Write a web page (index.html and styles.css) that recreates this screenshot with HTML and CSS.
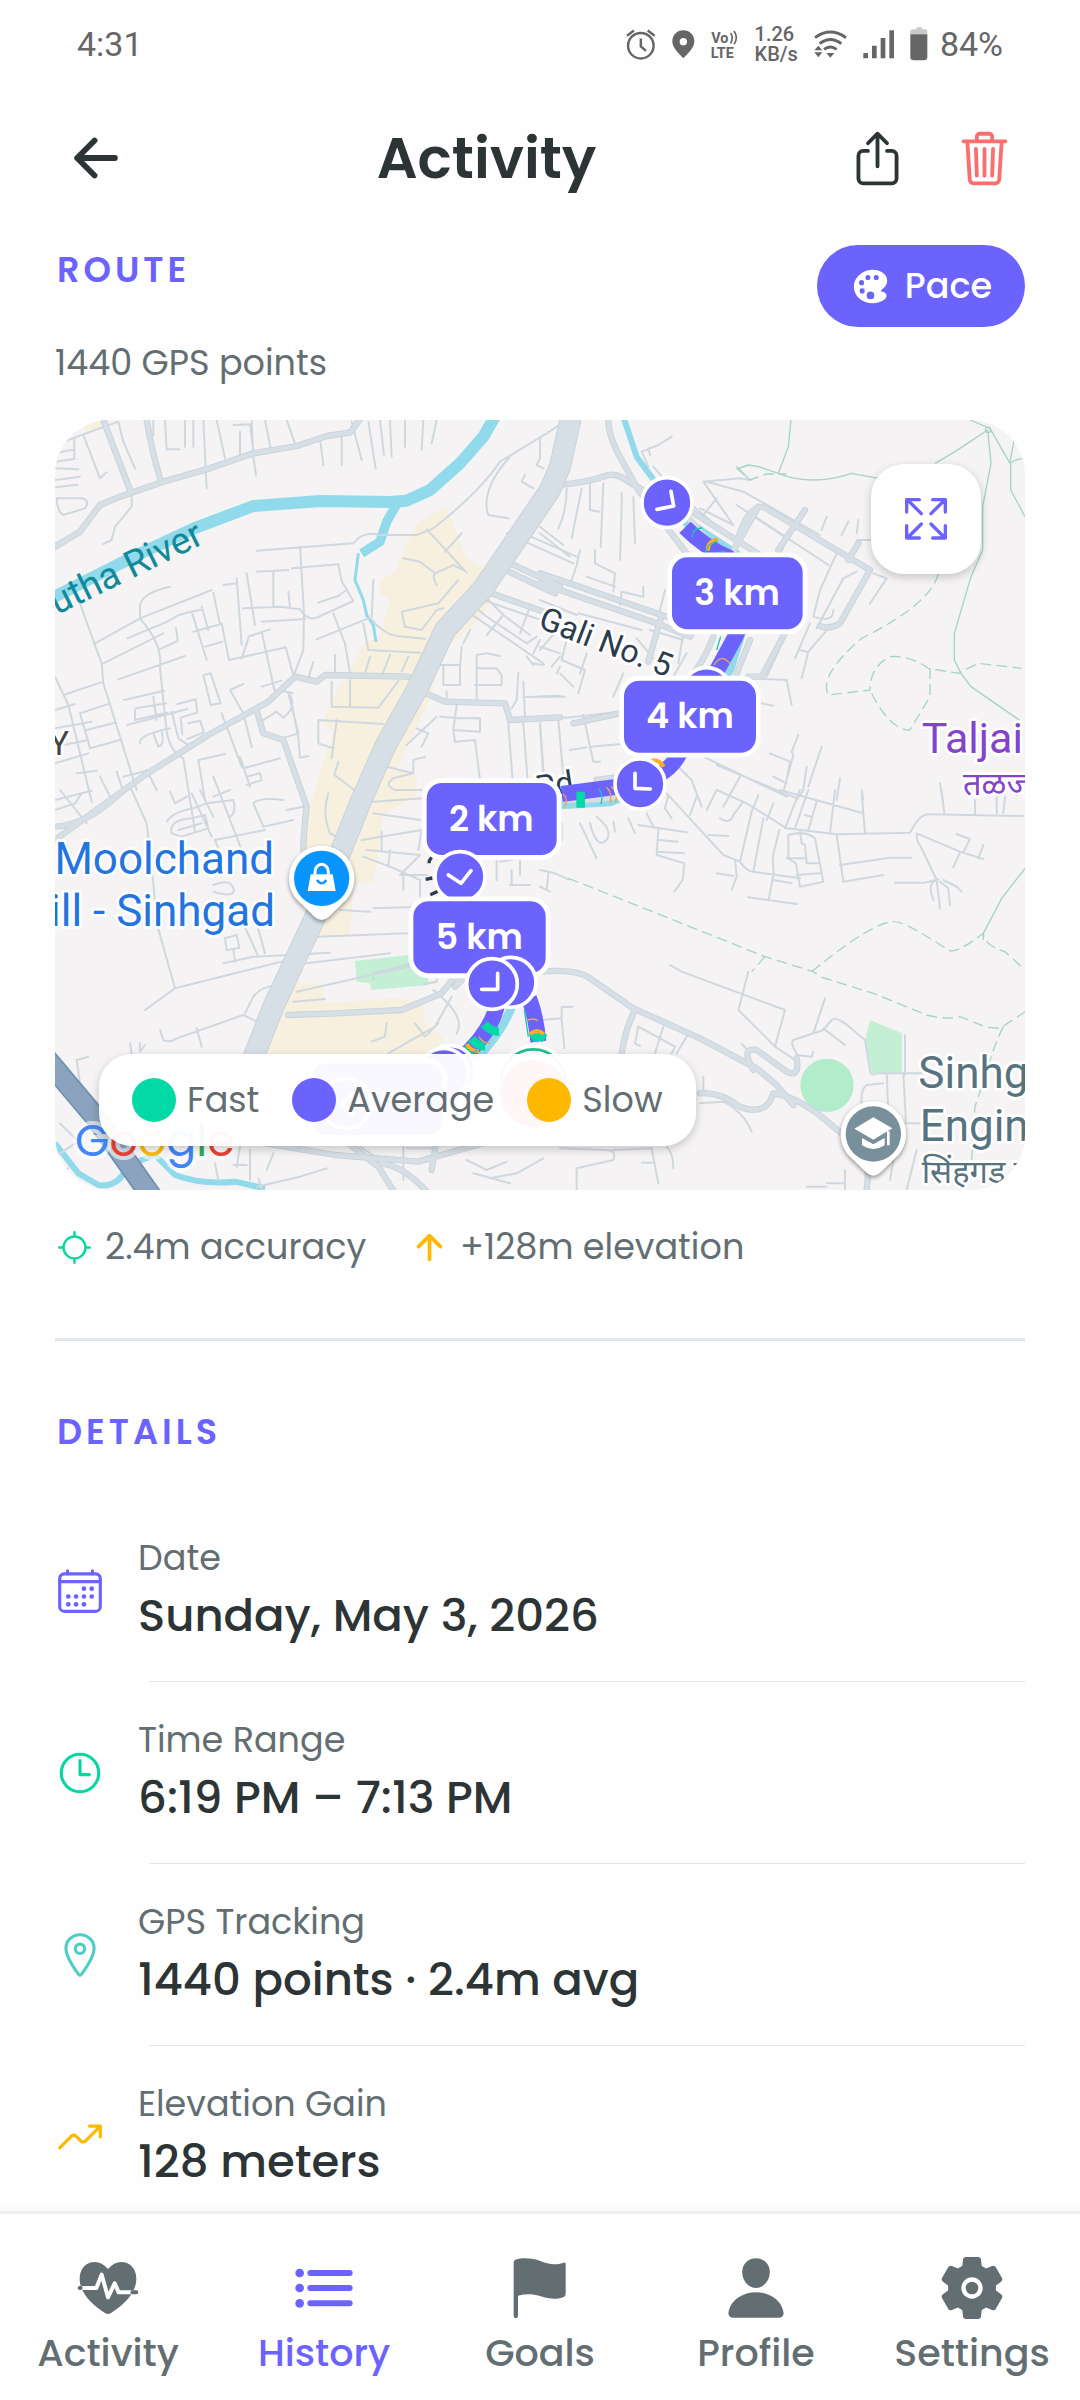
FILE: index.html
```html
<!DOCTYPE html>
<html lang="en">
<head>
    <meta charset="utf-8">
    <meta name="viewport" content="width=device-width, initial-scale=1">
    <title>Activity</title>
    <link rel="stylesheet" href="styles.css">
</head>
<body>
    <div class="statusbar">
        <span>4:31</span>
        <div class="status-icons">
            <svg width="30" height="33" viewBox="87 54 87 93" fill="none" stroke="#666" stroke-width="7">
                <circle cx="130" cy="104" r="37"/>
                <path d="M90 75l20-15M170 75l-20-15"/>
                <path d="M130 83v23l15 13"/>
            </svg>
            <svg width="23" height="31" viewBox="237 54 69 93">
                <path fill="#666" fill-rule="evenodd" d="M271 58c-19 0-33 14-33 33 0 20 18 34 33 51 15-17 33-31 33-51 0-19-14-33-33-33zm0 23a11 11 0 1 1 0 22 11 11 0 0 1 0-22z"/>
            </svg>
            <svg width="28" height="31" viewBox="344 54 84 93">
                <text class="volte" x="345" y="97">Vo</text>
                <text class="volte" x="343" y="141">LTE</text>
                <path fill="none" stroke="#666" stroke-width="5" d="M403 66q9 14 0 31M413 60q14 20 0 40"/>
            </svg>
            <span class="speed">1.26<br>KB/s</span>
            <svg width="33" height="31" viewBox="642 54 99 93" fill="none" stroke="#666" stroke-width="9">
                <path d="M645 80q46-34 93 0M659 98q32-25 65 0M672 115q19-14 38 0"/>
                <path fill="#666" stroke="none" d="M643 118l12-14 12 14zM643 124h24l-12 15zM679 126h24l-12 14z"/>
            </svg>
            <svg width="31" height="31" viewBox="792 54 93 93">
                <path fill="#666" d="M793 126h14v16h-14zM819 104h14v38h-14zM845 81h14v61h-14zM871 58h14v84h-14z"/>
            </svg>
            <svg width="18" height="34" viewBox="938 50 54 102">
                <path fill="#c9c9c9" d="M939 72V64q0-7 8-7h10v-6h17v6h9q7 0 7 7v8z"/>
                <path fill="#666" d="M939 72h51v68q0 10-10 10h-31q-10 0-10-10z"/>
            </svg>
            <span class="battery">84%</span>
        </div>
    </div>

    <header class="header">
        <button class="icon-btn" type="button" aria-label="Back">
            <svg class="stroke-bold" width="62" height="62" viewBox="0 0 512 512">
                <path d="M244 400L100 256l144-144M120 256h292"/>
            </svg>
        </button>
        <h1>Activity</h1>
        <div class="actions">
            <button class="icon-btn" type="button" aria-label="Share">
                <svg class="stroke" width="61" height="61" viewBox="0 0 512 512">
                    <path d="M336 192h40a40 40 0 0140 40v192a40 40 0 01-40 40H136a40 40 0 01-40-40V232a40 40 0 0140-40h40M336 128l-80-80-80 80M256 321V48"/>
                </svg>
            </button>
            <button class="icon-btn red" type="button" aria-label="Delete">
                <svg class="stroke" width="61" height="61" viewBox="0 0 512 512">
                    <path d="M112 112l20 320c.95 18.49 14.4 32 32 32h184c17.67 0 30.87-13.51 32-32l20-320M80 112h352M192 112V72a24 24 0 0124-24h80a24 24 0 0124 24v40M256 176v224M184 176l8 224M328 176l-8 224"/>
                </svg>
            </button>
        </div>
    </header>

    <main>
        <section class="route">
            <div class="route-head">
                <h2>ROUTE</h2>
                <button class="pace" type="button">
                    <svg width="41" height="41" viewBox="0 0 512 512" fill="currentColor">
                        <path d="M441 336.2l-.06-.05c-9.93-9.18-22.78-11.34-32.16-12.92l-.69-.12c-9.05-1.49-10.48-2.5-14.58-6.17-2.44-2.17-5.35-5.65-5.35-9.94s2.91-7.77 5.34-9.94l30.28-26.87c25.92-22.91 40.2-53.66 40.2-86.59s-14.25-63.68-40.2-86.6c-35.89-31.59-85-49-138.37-49C223.72 48 162 71.37 116 112.11c-43.87 38.77-68 90.71-68 146.24s24.16 107.47 68 146.23c21.75 19.24 47.49 34.18 76.52 44.42a266.17 266.17 0 0086.87 15h1.81c61 0 119.09-20.57 159.39-56.4 9.7-8.56 15.15-20.83 15.34-34.56.21-14.17-5.37-27.95-14.93-36.84zM112 208a32 32 0 1132 32 32 32 0 01-32-32zm40 135a32 32 0 1132-32 32 32 0 01-32 32zm40-199a32 32 0 1132 32 32 32 0 01-32-32zm64 271a48 48 0 1148-48 48 48 0 01-48 48zm72-239a32 32 0 1132-32 32 32 0 01-32 32z"/>
                    </svg>
                    Pace
                </button>
            </div>
            <p class="points">1440 GPS points</p>

            <div class="map">
                <svg class="map-canvas" viewBox="0 0 2910 2310" preserveAspectRatio="xMidYMid slice">
                    <!-- roads are drawn twice: outline, then the lighter fill -->
                    <defs>
                        <g id="roads">
                            <path d="M0 380l75-45 60-80 60-25 130-45 140-40 130-45 130-22 90-30 70-10 30-40"/>
                            <path d="M145 0l80 210M275 0q15 90 40 175"/>
                            <path d="M1060 770l-250-5-25 20-65-15-80 75-180 100-190 120L0 1260M605 870l20 70 60 20 70 200q-10 80-10 130M0 1220q80-5 160-70l60-50"/>
                            <path d="M1100 815l70 30 180 5 15 50 150-8M1280 510l200 70M1345 420l170 80M1330 440l170 80"/>
                            <path d="M1500 195q90-5 160-30 30-5 60 20l80 45 70 30 140 160M1660 0q0 50 40 120l50 90 160 210M1870 250l300 190M2045 370q30-110 80-110l320 190-90 160q-30 20-60 8M2110 260l-90 160M2250 270l-80 120M2410 370l-30 50"/>
                            <path d="M1455 460l380 130 60-10M1455 490l350 120 100 40 100-190M1820 585l-40 140M2200 620l-80 150h-40M2085 660l-60 150-170 240-230 30M1975 650q-40 110-140 200l-280 60"/>
                            <path d="M1455 1140h140q100 0 190-50l60-70M1200 1590v80l-40 50-120 50-200 10-140 5M1200 1700l60-60M1455 1655q110-10 150 20l130 90 200 90 170 90 60 50 50 60M1740 1770q-30 60-40 130M2095 1950q-40-70 10-60l90 65q40 20 30-40M1935 2020q60-5 120 40 80 30 100-40 80 10 180 100l90 70q20 50 10 120"/>
                            <path d="M540 2155l300 50 250 20 280-80M880 2170l90 70 50 80M980 2230q70 10 140 90M1130 2250l20-120"/>
                        </g>
                        <path id="highway" d="M1555-40l-40 180-30 70-200 295-115 125-85 180-95 170-75 170-60 150-60 160-140 300-110 280"/>
                    </defs>

                    <!-- blocks -->
                    <g transform="translate(-45 -60)">
                        <path class="shop" d="M130 65l80-5-20 25-50 15zM1280 475l105 60-60 120-110 90-45 150-70 150-30 60 60 20v60l-100 60-30 200-60 10-10 150-130 0 20-130-40-130 60-230 40-120-30-25 30-80 60-100 30-60 50-20 30-110-30-20v-40l40-20 70-150 90-50z"/>
                        <path class="shop" d="M700 1750h150v60l220-15 80 10v60l60 50-60 90-50-40-380 10-60-30-40 20z"/>
                        <path class="park" d="M945 1683l160-18 60 70v20l-170 15-5-20-40-5z"/>
                    </g>
                    <g transform="translate(1455 1110)">
                        <path class="park" d="M990 690l96 40v118l-90 2-20-100z"/>
                        <circle class="park-dark" cx="861" cy="886" r="80"/>
                    </g>

                    <!-- water -->
                    <g class="water" transform="translate(-45 -60)">
                        <path stroke-width="36" d="M1370 40l-40 70-70 80-90 80-70 32-50 4-210-3-200 15-180 68-160 75-100 50-170 86"/>
                        <path stroke-width="28" d="M1075 305l-35 60-20 60-55 35"/>
                        <path stroke-width="9" d="M955 460l-5 40-5 40 25 60 10 45 20 30 8 50"/>
                        <path stroke-width="18" d="M45 2230l70 90 60 35q60 10 90-60l80-30 60 60q80 30 180 20l90 20"/>
                        <path stroke-width="26" d="M1415 1820q-30 80-110 160"/>
                    </g>
                    <g class="water" transform="translate(1455 -60)">
                        <path stroke-width="18" d="M250 50l40 120 55 75"/>
                        <path stroke-width="28" d="M400 340l190 125 30 180-50 160-160 260-80 90-120 50-200 12"/>
                    </g>

                    <!-- small streets, north west -->
                    <g class="street" transform="translate(-45 -60)">
                        <path d="M45 135l80-30 110-40M45 160l60-12M45 185l58-8V120M45 205l70 3M45 240l75-10M45 262l68-8M130 105l50 130 20-18M235 65l15 60 35 80M375 60l5 88h38M340 60v45M435 60v80M460 60v80M490 60l10 205M530 60l25 115M580 75l50-2 10 80M600 95v70M635 60l5 110 8 55M675 60l18 90M740 60l25 70M840 115l10 80M905 110v85M935 65l30 115M985 65l22 140M1020 60l12 105M1050 60l5 110M1095 60v80M1150 60l-5 90M1190 60l-15 70"/>
                        <path d="M50 295h80q20 10 5 30l-65 20q-18-10-20-50M275 290v30l-50 60-10 40-25 12"/>
                        <path d="M650 452l290-22q30-40 80-25h110l50-20q140-110 200-200l140-85 60-40M1500 115v60l-10 20 20 10M1410 170q-90 100-65 175l60 10M1480 265l-35-20 10-20"/>
                        <path d="M780 440l12 200-2 110-30 80M650 515l95-5M755 505l140-12 10 50 35 60-110 50q-30 10-50-25l-60-8-110 5M700 515v105M745 575l5 45M835 608l60-20 20-15M665 665l130-8M620 520l25 155M590 535l15 200M550 555l40-5M390 560q-90 20-90 60v35l-135 75M300 655l215-85M300 655q70 80 60 150l20 190q10 60 50 80l35 220M120 610l50 140 15 40 5 60 100 320M190 790l180-90M235 838l200-70M45 830l40 85 70 290M70 885l120-40M262 715l120-50 35-20 35-10 30-5M358 748l55-25-5-40M455 635l45 145M485 620l20 70M460 695l80-22-20-95M497 740l50-15M545 670l22 110 170-38 25 90M625 710l65-22M605 775l20-60M665 695l38 175 55 8M830 718l160-65q40 50 80 55l85 8M880 640l35 90 15 90M970 670l15 80 155 8M885 765v55M820 785l-15 50M990 770l-15 50M1050 765l-22 55M1105 770l-20 45"/>
                        <path d="M1090 475l50 10 45 35 55-25 30 15M1185 520q-10 10 5 35M1160 388l120 130M1265 400l-50 55M1085 635l110-25 60-70M1085 635l10 45 50 10 45-60 20-5M1000 540l-5 110"/>
                        <path d="M490 825l22-5 30 90-30 5zM570 870l40-18M570 870l40 70 25 100M545 940l60 160M252 900l120-28M288 925l90-15M285 930v30l95-22M262 975l180-48M340 890l10 70M395 935l20 80 30 20M412 912l55-14 5 40-50 15 5 50M445 970l35-8 12 35-50 20M300 1030q-5-25 90-45M340 1000l15 40q20-5 10-45M120 940l90-30M120 940l30 105 90-25M140 990l85-22M475 1080l80-18M475 1080l20 120M520 1130l85 220M600 1070l30 90M610 1105l110-30M620 1130l40-10 5 20-45 15M670 960l40-25 20 18q40-30 20-70l25 130 5 60 25-5M745 880l30 120-50 15M665 860l60-18"/>
                        <path d="M875 845v75l140 3 60-80M930 840v80M835 960l195 12M890 960l-15 115M835 960v70l45 15M895 1085l-12 40 60 45M1040 1100l80 20-60 15q-30 20 5 35h80M1155 1070l-35 10v40"/>
                        <path d="M1200 950l60 5h60v40l-80-5 5 35 60-5 20 160M1100 1035l90-85M1130 985l35 15-20 40M1250 915l-10 75M1220 875v30M1190 795h70v60h-50v-60M1265 740l-5 60M1310 905v-140l30-5 40 8M1310 805h60l15 20v30h-80M1435 820l-5 80-15 25M1450 845l5 110M1450 892l110-5M1405 970l15 200M1450 970l15 200M1500 970l15 200"/>
                        <path d="M1280 600l60 50 120 80 30-20M1330 585l60 60-50 60M1390 645l80 60M1290 640l220 150q10 10-30 0M1260 670l-30 40M1290 690l-20 40M1400 400l200 90M1450 400l160 70M1470 620l-30 80M1330 600l230 80-60 70M1460 770l20 25M1500 720l-20 40"/>
                        <path d="M45 930l60-18M45 985l110-20M45 1040l100-20M45 1090l100-30M110 1120l60-8M45 1200l110-28M180 1130l30 60M230 1115l20 60M250 1130l70-18M320 1110l30 60"/>
                    </g>
                    <!-- small streets, west and south -->
                    <g class="street" transform="translate(-45 1110)">
                        <path d="M275 0l45 100 20 180 10 120 55 195-90 65M405 595l180-45 200-50M550 520l90-20 230-12M555 445l35-10 8 38-38 8zM580 480l5 35M610 400l45 100M650 400l25 90M390 5l15 35 35-20M380 95q20-30 80-40l40-15 80-10q10 40-10 50M395 130q-10-40 60-45l40-10 10 40-80 25zM415 120l70-20M455 10l60 130M480 0l40 80M640 40q20-20 90-10M640 40l30 70 90-20M525 150l150-30M525 150l20 50M570 0l-50 20M520 285q50-20 60 10t-60 10M740 60l50-10M45 60l60-20 20-30M60 0l80 100"/>
                        <path d="M830 440l310-12M800 520l250-30M770 605l400-90h20v60l-40 8M1000 570v-20l120-30M760 635l95-8M615 670l25-50q20-30 75-35M360 720l10 30q20 10 40-5l200-70 40 20M470 715l15 55M270 760l12 70M300 760v25l15-20M145 800l-35 10 20 140"/>
                        <path d="M865 10q-20 60 5 120l20 10M1000 35l150-10M1000 70l140 20M965 150l180-30-10 60M980 180l160 15-60 60h80M1025 125v60M1050 180l-5 50M1090 250v50M970 200l80 30 90 40v50M1000 355l150-5M900 360l90 5M1200 180v40l70 10 30-15M1310 180l60 10v80M1380 215l60-10v50M1415 240v45M1410 285h60M1040 700l-5 40-40 15M1125 700l30 40 40-40M1045 790l140-80 50-90M1180 600q100 80 70 130"/>
                        <path d="M960 1070l60 40M1090 1100v-30M1090 1170v-70M580 1125h40M600 1070l-10 60M650 1190l130-30 80-25M655 1165l10 30M630 1080v90M700 1090l-20 50M525 1120l10 50M1100 1075h80M1280 1110l60 30 60-25M1300 1150l110 30M1350 1165l80-15 80-45M45 1155l40-20M60 1000l60 60M45 1100l60-40"/>
                    </g>
                    <!-- small streets, north and east -->
                    <g class="street" transform="translate(1455 -60)">
                        <path d="M395 110l-40 25-50 20 20 45M325 145l5 20M80 265q0 70-25 120M125 265l-30 150M150 250v80l28 5M190 250l-8 190M245 280v40l-5 160M280 290l5 140M340 200l60 70 110 90M490 245l110-10 30 5-40-40M490 245l90 130-100-50M530 295l-40 50M500 245l110 30 230 130M590 315l150 100-20 50M645 350l220 145M0 400l90 70M0 380l70 55M120 450l-10 45-20 60M165 450v40l60 30-5 55M140 530l85 30M245 575l-5 40M245 575l65 15v-30M375 570l-15 60M0 600l110 45M115 640l190 50M860 350l-15 40M925 365l-20 40M955 360l-5 40M1000 420h-50M1000 520l40 15-50 75M950 515l-40 20-80 150M890 460l-50 110-20 80q60 20 60-20M740 700l-60 130"/>
                        <path d="M865 685l-60 70-20 80M810 670l-45 105M780 750l20 5M640 835l100 5 15 75M640 905l60 12M0 740l60 20M85 700l-20 80 70 30-20 70M140 760l-20 60M60 770l-25 30M0 890h75M60 820l40 40M290 715l50 60M330 690l100 30M430 700l-15 90M250 820l-30 70M440 760l-40 70M60 800l-10 20"/>
                        <path d="M0 960l130-12 150-18h110M55 960l15 170M0 970l10 160M130 945l20 95 170-15M90 1050l50-8M150 1040l10 45h20M395 1080l60 60 30 80M490 1070l250 120M530 1095l240 100M775 1005l-20 50 5 10-30 110M690 1060l60 25-10 55M845 1040l-40 120M700 1130l40 20M600 1130l-50 90M800 1100l-10 70-20 30M900 1135l-10 65M965 1170l5 30M1200 1150l8 50"/>
                    </g>
                    <g class="street" transform="translate(1455 1110)">
                        <path d="M530 0l90 40 120 75 150 18 220-5q30-60 60-55l280 5M380 10l170 185 50 20M385 15l-10 40 20 30M470 20l-20 55M505 135l60 3M500 60l30-60M540 85q30 20 40-10l30-40M700 40l-20 50M655 15l-20 50-35 150q20 30 40 30l140 20M670 85l-30 160M718 120l-20 80 3 50-15 80M625 322l145 20M700 270l55 10M745 135q50-15 80 10l25 130-70 15-12-70-23-15zM780 120l5 40 10 5 5 55h35M740 205h60M770 255l70-5M780 0l-45 115M805 0l-40 115M830 35l-25 85M885 0l-15 130M965 10l10 120M720 0l250 70M795 75l20 5"/>
                        <path d="M1205 0l8 70M1305 30v45M1370 20v50M1395 20l-5 50M1130 130l130 55 70 22M1250 132l40 15-20 40-10 0-20 45M1330 165l-15 40M1130 135q0 20 10 30l50 105 10 85M1065 278h90l40-10M1190 270q-30 10-10 60M1200 275l25 20 5 50M1210 270l40 20 15 15M890 135l20 140 120-20M900 225l150-22h65"/>
                        <path d="M295 105l145 22M320 70l20 40M355 120l-5 75 83 25-5 50-25 35M358 150l55 5M352 185l80 5M150 100q20 80 50 50 20-30-30-70M120 100l50 105M220 95l5 30M265 85l20 45M530 250l50 8M585 210l5 50-15 40M65 100v50M0 240l40 8 45 20M0 290l30 15M25 250l-5 50"/>
                        <path d="M390 525l35 20 310 115-30 110 60 40 5-20q-20-30-10-40l90-30 25-30q10-10 40 10l60 50 15 90q0 20 20 10h135M605 762l20 20M625 545l-30 115 110 110M820 730l35-105M850 715l65 50M770 795l45 5 5-15M1040 850l5 110M1090 850l8 150h40M1095 735v120M1030 880l-50 5q-20 15-15 60"/>
                        <path d="M0 690l65-5v-33l33-2M65 690l8 85M295 710l110 60-10 20M295 710l-10 50 15 8M370 710l-25 80M440 740l-30 50M490 860v50M480 940l70-5q60 30 85 90M110 1200v-65l110-25q10-30-20-30l-140-5M220 1080l115-5 20 105M305 1118h40M380 1070q20 20 20 65M915 1140v60M860 1180h55M1130 1080l-30 120M1060 1110l-10 60M800 1190h60"/>
                    </g>

                    <use class="road-edge" href="#roads"/>
                    <use class="road-fill" href="#roads"/>
                    <use class="highway-edge" href="#highway"/>
                    <use class="highway-fill" href="#highway"/>
                    <path class="railway-edge" d="M-40 1900l160 190 170 240"/>
                    <path class="railway" d="M-40 1900l160 190 170 240"/>

                    <!-- hill trails -->
                    <g class="trail" transform="translate(1455 -60)">
                        <path d="M753 60l-8 80-30 80-60-20-30-5-33 12M715 220q100 40 220 0l80 15M1185 190l60-35 98-65 10 100-25 130v130l-35 80-50 170v80l20 40 30 40 145 100M1290 60l60 25 60 105q20-15 45-15M1412 190v80l43 80M1425 105l-15 80"/>
                        <circle cx="1344" cy="90" r="8"/>
                        <path class="dashed" d="M590 205l40 35 50-18h60M1195 520q-20 90-230 195-130 110-100 170l125-15q0-70 60-100 60-5 115 35l90 15 60-30 130 15M1170 805v85l-60 100q-60 0-115-110"/>
                    </g>
                    <g class="trail" transform="translate(1455 1110)">
                        <path d="M1455 235l-70 90-55 105v20"/>
                        <path class="dashed" d="M85 265l190 75 400 160 145 45 20 15 160 50 160 65q60 15 100 5l80 32 40 3 80-53M675 500l-40 45M815 545q190-155 250-150 30 0 160 85 20 15 105-50 0 35 65 55l60 55M1390 710q-30 60-45 120l-40 120-10 160"/>
                    </g>

                    <!-- place names -->
                    <g class="label">
                        <text class="river" transform="translate(452 368) rotate(-26)" text-anchor="end">Mutha River</text>
                        <text class="area" x="-18" y="1005">Y</text>
                        <text class="lane" transform="translate(1446 622) rotate(21)">Gali No. 5</text>
                        <text class="lane" transform="translate(1447 1136) rotate(-9)">Rd</text>
                        <text class="place-shop" x="657" y="1362" text-anchor="end">Moolchand</text>
                        <text class="place-shop" x="660" y="1518" text-anchor="end">ill - Sinhgad</text>
                        <text class="place-hill" x="2600" y="1000">Taljai</text>
                        <text class="place-hill small" x="2724" y="1125">तळजाई</text>
                        <text class="place-school" x="2590" y="2005">Sinhgad</text>
                        <text class="place-school" x="2594" y="2162">Engineering</text>
                        <text class="place-school small" x="2600" y="2288">सिंहगड कॉलेज</text>
                    </g>
                    <path class="lane-mark" d="M1112 1378l20-4M1126 1424l26-12M1130 1312q-8 8-8 18"/>
                    <text class="google" x="60" y="2209"><tspan fill="#4285f4">G</tspan><tspan fill="#ea4335">o</tspan><tspan fill="#fbbc04">o</tspan><tspan fill="#4285f4">g</tspan><tspan fill="#34a853">l</tspan><tspan fill="#ea4335">e</tspan></text>

                    <!-- place pins -->
                    <g transform="translate(800 1375)">
                        <path class="pin" d="M0-98a98 98 0 0 1 76 160L22 115q-22 20-44 0L-76 62A98 98 0 0 1 0-98z"/>
                        <circle r="83" fill="#0895ff"/>
                        <path fill="#fff" d="M-33-12h66l9 50h-84z"/>
                        <path fill="none" stroke="#fff" stroke-width="9" d="M-20-12v-8a20 22 0 0 1 40 0v8"/>
                        <path fill="none" stroke="#0895ff" stroke-width="7" d="M-14 5q14 20 28 0"/>
                    </g>
                    <g transform="translate(2455 2142)">
                        <path class="pin" d="M0-98a98 98 0 0 1 76 160L22 115q-22 20-44 0L-76 62A98 98 0 0 1 0-98z"/>
                        <circle r="83" fill="#78909c"/>
                        <path fill="#fff" d="M0-50l57 33L0 17l-57-33zM-34 12L0 31l34-19v22Q0 56-34 34zM41-8h8v42h-8z"/>
                    </g>

                    <!-- run track -->
                    <g class="track">
                        <path d="M1890 322q60 60 130 90 40 60 50 130 0 50-30 110l-60 110-90 200q-20 60-60 90-60 45-140 48l-170 22"/>
                        <path d="M1325 1760q-20 80-110 160M1422 1735q20 50 28 130"/>
                    </g>
                    <g class="fast">
                        <path d="M1577 1115v48M1288 1812q20 24 44 22M1250 1856q18 24 40 22M1222 1885l24 24M1430 1856q20-14 40 0"/>
                    </g>
                    <g class="slow">
                        <path d="M1958 392q0-28 30-34M1790 1022q24-4 36 18M1236 1872q10 22 36 22M1426 1842q20-18 40 0"/>
                    </g>
                    <g class="ticks">
                        <path stroke="#1fc7b0" d="M1912 352q-2-28 30-28M1952 404q0-34 36-40M1985 398l25-4M1985 690l12-40M1630 1106q16 14 8 46M1218 1920l50-30M1408 1770l12 80"/>
                        <path stroke="#f0a050" d="M1977 735q22-36 48-4M1654 1102q18 12 12 48M1668 1100q22 14 14 46M1525 1122q16 16 4 40M1415 1802q18-10 34 0M1272 1850q10 20 34 20"/>
                    </g>

                    <!-- start and finish markers -->
                    <circle cx="1435" cy="1980" r="108" fill="#fff"/>
                    <circle cx="1435" cy="1984" r="96" fill="#fff" stroke="#1fbf95" stroke-width="8"/>
                    <circle cx="1435" cy="2020" r="100" fill="#f05252"/>
                    <path fill="none" stroke="#fff" stroke-width="14" d="M1410 2010l20 30 40-40"/>

                    <!-- direction markers below the badges -->
                    <g class="dot">
                        <circle cx="1186" cy="1952" r="75"/>
                        <circle cx="1166" cy="1960" r="75"/>
                        <circle cx="1836" cy="248" r="75"/>
                        <circle cx="1955" cy="818" r="75"/>
                        <circle cx="1755" cy="1092" r="75"/>
                    </g>
                    <g class="arrow">
                        <path d="M1848 214l8 44-50 10M1740 1060v45l46 2"/>
                    </g>

                    <!-- distance badges -->
                    <g class="badge">
                        <rect x="770" y="1930" width="392" height="216" rx="46"/>
                        <rect x="1851" y="412" width="392" height="216" rx="46"/>
                        <rect x="1707" y="782" width="396" height="216" rx="46"/>
                        <rect x="1115" y="1089" width="390" height="216" rx="46"/>
                    </g>
                    <g class="dot">
                        <circle cx="1215" cy="1370" r="75"/>
                    </g>
                    <path class="arrow" d="M1180 1365l38 25 30-38"/>
                    <g class="badge">
                        <rect x="1075" y="1444" width="397" height="216" rx="46"/>
                    </g>
                    <g class="badge-text">
                        <text x="966" y="2074">1 km</text>
                        <text x="2046" y="554">3 km</text>
                        <text x="1905" y="924">4 km</text>
                        <text x="1309" y="1232">2 km</text>
                        <text x="1273" y="1587">5 km</text>
                    </g>
                    <g class="dot">
                        <circle cx="1368" cy="1687" r="75"/>
                        <circle cx="1311" cy="1692" r="76"/>
                        <circle cx="873" cy="2050" r="75"/>
                    </g>
                    <g class="arrow">
                        <path d="M1328 1660v48h-48M890 2020l-26 32 30 30"/>
                    </g>
                </svg>

                <button class="expand" type="button" aria-label="Full screen">
                    <svg width="48" height="48" viewBox="1084 284 144 144">
                        <path d="M1142 340l-42-42M1098 335v-37h38M1171 340l42-42M1176 298h38v37M1142 371l-42 42M1098 376v37h38M1171 371l42 42M1176 413h38v-37"/>
                    </svg>
                </button>
                <ul class="legend">
                    <li><i class="swatch swatch-fast"></i>Fast</li>
                    <li><i class="swatch swatch-average"></i>Average</li>
                    <li><i class="swatch swatch-slow"></i>Slow</li>
                </ul>
            </div>

            <div class="meta">
                <span class="meta-item">
                    <svg class="stroke green" width="39" height="39" viewBox="0 0 512 512">
                        <path d="M256 96V56M256 456v-40M256 112a144 144 0 10144 144 144 144 0 00-144-144zM416 256h40M56 256h40"/>
                    </svg>
                    2.4m accuracy
                </span>
                <span class="meta-item">
                    <svg class="stroke-bold yellow" width="39" height="39" viewBox="0 0 512 512">
                        <path d="M112 244l144-144 144 144M256 120v292"/>
                    </svg>
                    +128m elevation
                </span>
            </div>
        </section>

        <section class="details">
            <h2>DETAILS</h2>
            <div class="detail">
                <svg class="stroke purple" width="50" height="50" viewBox="0 0 512 512">
                    <rect x="48" y="80" width="416" height="384" rx="48"/>
                    <path d="M128 48v32M384 48v32M464 160H48"/>
                    <g fill="currentColor" stroke="none">
                        <circle cx="296" cy="232" r="24"/><circle cx="376" cy="232" r="24"/>
                        <circle cx="136" cy="312" r="24"/><circle cx="216" cy="312" r="24"/>
                        <circle cx="296" cy="312" r="24"/><circle cx="376" cy="312" r="24"/>
                        <circle cx="136" cy="392" r="24"/><circle cx="216" cy="392" r="24"/>
                        <circle cx="296" cy="392" r="24"/>
                    </g>
                </svg>
                <div>
                    <p class="name">Date</p>
                    <p class="value">Sunday, May 3, 2026</p>
                </div>
            </div>
            <hr>
            <div class="detail">
                <svg class="stroke green" width="50" height="50" viewBox="0 0 512 512">
                    <circle cx="256" cy="256" r="192"/>
                    <path d="M256 128v144h96"/>
                </svg>
                <div>
                    <p class="name">Time Range</p>
                    <p class="value">6:19 PM – 7:13 PM</p>
                </div>
            </div>
            <hr>
            <div class="detail">
                <svg class="stroke mint" width="50" height="50" viewBox="0 0 512 512">
                    <path d="M256 48c-79.5 0-144 61.39-144 137 0 87 96 224.87 131.25 272.49a15.77 15.77 0 0025.5 0C304 409.89 400 272.07 400 185c0-75.61-64.5-137-144-137z"/>
                    <circle cx="256" cy="192" r="48"/>
                </svg>
                <div>
                    <p class="name">GPS Tracking</p>
                    <p class="value">1440 points · 2.4m avg</p>
                </div>
            </div>
            <hr>
            <div class="detail">
                <svg class="stroke yellow" width="50" height="50" viewBox="0 0 512 512">
                    <path d="M352 144h112v112"/>
                    <path d="M48 368l121.37-121.37a32 32 0 0145.26 0l50.74 50.74a32 32 0 0045.26 0L448 160"/>
                </svg>
                <div>
                    <p class="name">Elevation Gain</p>
                    <p class="value">128 meters</p>
                </div>
            </div>
        </section>
    </main>

    <nav class="tabs">
        <a href="#activity">
            <svg width="68" height="68" viewBox="220 162 204 204">
                <path fill="currentColor" d="M322 207c-12-14-25-21-40-21-27 0-45 22-45 50 0 46 42 81 77 104q8 4 16 0c35-23 77-58 77-104 0-28-18-50-45-50-15 0-28 7-40 21z"/>
                <path class="pulse" d="M244 264h43l16-40 19 68 20-42 12 27h42"/>
                <path class="pulse-end" d="M237 264h3M395 277h12"/>
            </svg>
            Activity
        </a>
        <a class="active" href="#history">
            <svg width="68" height="68" viewBox="870 162 204 204">
                <path class="list" d="M931 219h118M931 264h118M931 310h118"/>
                <g fill="currentColor"><circle cx="899" cy="219" r="13"/><circle cx="899" cy="264" r="13"/><circle cx="899" cy="310" r="13"/></g>
            </svg>
            History
        </a>
        <a href="#goals">
            <svg width="68" height="68" viewBox="1518 162 204 204">
                <path fill="currentColor" d="M1541 187q0-6 5-8c12-6 45-7 73 3 24 9 44 16 71 6q7-3 7 5v88q0 7-6 10c-20 9-43 6-71-3-24-7-44-6-66-1v61a6 6 0 0 1-13 0z"/>
            </svg>
            Goals
        </a>
        <a href="#profile">
            <svg width="68" height="68" viewBox="0 0 512 512">
                <path fill="currentColor" d="M332.64 64.58C313.18 43.57 286 32 256 32c-30.16 0-57.43 11.5-76.8 32.38-19.58 21.11-29.12 49.8-26.88 80.78C156.76 206.28 203.27 256 256 256s99.16-49.71 103.67-110.82c2.27-30.7-7.33-59.33-27.03-80.6zM432 480H80A31 31 0 0155.8 468.87c-6.5-7.77-9.12-18.38-7.18-29.11C57.06 392.94 83.4 353.61 124.8 326c36.78-24.51 83.37-38 131.2-38s94.42 13.5 131.2 38c41.4 27.6 67.74 66.93 76.18 113.75 1.94 10.73-.68 21.34-7.18 29.11A31 31 0 01432 480z"/>
            </svg>
            Profile
        </a>
        <a href="#settings">
            <svg width="68" height="68" viewBox="-102 -102 204 204">
                <g fill="currentColor">
                    <circle r="72"/>
                    <path id="teeth" d="M-30-60l3-25q1-8 9-8h36q8 0 9 8l3 25V60l-3 25q-1 8-9 8h-36q-8 0-9-8l-3-25z"/>
                    <use href="#teeth" transform="rotate(60)"/>
                    <use href="#teeth" transform="rotate(120)"/>
                </g>
                <circle r="32" fill="#fff"/>
                <circle r="19" fill="currentColor"/>
            </svg>
            Settings
        </a>
    </nav>
</body>
</html>
```

FILE: styles.css
```css
*{
    box-sizing: border-box;
}
body{
    margin: 0;
    min-height: 100vh;
    display: flex;
    flex-direction: column;
    background: #fefefe;
    color: #2d3436;
    font-family: Poppins, Inter, sans-serif;
    font-size: 35px;
    line-height: 50px;
}
h1, h2, p, ul{
    margin: 0;
    padding: 0;
}
svg{
    display: block;
    flex-shrink: 0;
}
button{
    border: 0;
    padding: 0;
    font: inherit;
    color: inherit;
    background: none;
}
main{
    flex: 1;
    padding: 0 55px;
}

/* status bar */
.statusbar{
    height: 88px;
    padding: 0 77px;
    display: flex;
    align-items: center;
    justify-content: space-between;
    font-family: Roboto, sans-serif;
    font-size: 34px;
    color: #666;
}
.status-icons{
    display: flex;
    align-items: center;
    gap: 16px;
}
.speed{
    font-size: 20px;
    font-weight: 500;
    line-height: 20px;
}
.battery{
    margin-left: -4px;
}
.volte{
    font-family: Roboto, sans-serif;
    font-size: 43px;
    font-weight: 700;
    fill: #666;
}

/* header */
.header{
    height: 140px;
    padding: 0 55px;
    display: flex;
    align-items: center;
}
h1{
    flex: 1;
    text-align: center;
    font-size: 57px;
    font-weight: 600;
}
.actions{
    display: flex;
    gap: 25px;
}
.icon-btn{
    width: 82px;
    height: 82px;
    display: flex;
    align-items: center;
    justify-content: center;
}
.stroke, .stroke-bold{
    fill: none;
    stroke: currentColor;
    stroke-width: 32;
    stroke-linecap: round;
    stroke-linejoin: round;
}
.stroke-bold{
    stroke-width: 48;
}
.red{
    color: #f7706f;
}
.green{
    color: #06d6a0;
}
.yellow{
    color: #ffb800;
}
.mint{
    color: #4ecdc4;
}
.purple{
    color: #6c63ff;
}

/* route */
h2{
    padding-left: 2px;
    font-size: 35px;
    font-weight: 600;
    letter-spacing: 4px;
    color: #6c63ff;
}
.route{
    padding: 17px 0 66px;
    border-bottom: 3px solid #dfe6e9;
}
.route-head{
    display: flex;
    align-items: flex-start;
    justify-content: space-between;
}
.pace{
    height: 82px;
    padding: 0 33px;
    display: flex;
    align-items: center;
    gap: 14px;
    border-radius: 41px;
    background: #6c63ff;
    color: #fff;
    font-weight: 500;
}
.points{
    margin: 11px 0 32px;
    color: #636e72;
}
.meta{
    margin-top: 32px;
    display: flex;
    gap: 44px;
    color: #636e72;
}
.meta-item{
    display: flex;
    align-items: center;
    gap: 11px;
}

/* map */
.map{
    position: relative;
    height: 770px;
    border-radius: 55px;
    overflow: hidden;
    background: #f5f3f4;
}
.map-canvas{
    width: 100%;
    height: 100%;
    fill: none;
    stroke-linejoin: round;
}
.shop{
    fill: #f7f0df;
}
.park{
    fill: #c3f0d5;
}
.park-dark{
    fill: #b1edca;
}
.water{
    stroke: #90daec;
}
.street{
    stroke: #d0d8df;
    stroke-width: 6;
    stroke-linecap: round;
}
.road-edge{
    stroke: #c9d2d8;
    stroke-width: 19;
    stroke-linecap: round;
}
.road-fill{
    stroke: #d6dfe5;
    stroke-width: 14;
    stroke-linecap: round;
}
.highway-edge{
    stroke: #c9d2d8;
    stroke-width: 66;
}
.highway-fill{
    stroke: #d6dfe6;
    stroke-width: 60;
}
.railway-edge{
    stroke: #6f8fae;
    stroke-width: 66;
}
.railway{
    stroke: #8ba3be;
    stroke-width: 56;
}
.trail{
    stroke: #a5d5c1;
    stroke-width: 4;
}
.dashed{
    stroke-dasharray: 32 16;
}
.label text{
    font-family: Roboto, "Noto Sans Devanagari", "Noto Sans", sans-serif;
    stroke: #fff;
    stroke-width: 16;
    paint-order: stroke;
}
.label .river{
    font-size: 112px;
    fill: #12899a;
    stroke: none;
}
.area{
    font-size: 100px;
    fill: #444;
}
.lane{
    font-size: 97px;
    fill: #2b3c4e;
}
.lane-mark{
    stroke: #2b3c4e;
    stroke-width: 10;
}
.place-shop{
    font-size: 132px;
    fill: #2374e1;
}
.place-hill{
    font-size: 129px;
    fill: #8443cb;
}
.place-school{
    font-size: 132px;
    fill: #57737f;
}
.label .small{
    font-size: 98px;
}
.google{
    font-size: 133px;
    stroke: #ffffff99;
    stroke-width: 24;
    paint-order: stroke;
}
.pin{
    fill: #fff;
    filter: drop-shadow(0 6px 6px #0006);
}
.track{
    stroke: #6c63ff;
    stroke-width: 48;
}
.fast{
    stroke: #03d9a5;
    stroke-width: 26;
}
.slow{
    stroke: #ffae20;
    stroke-width: 12;
}
.ticks{
    stroke-width: 4;
}
.dot{
    fill: #6c63ff;
    stroke: #fff;
    stroke-width: 11;
}
.arrow{
    stroke: #fff;
    stroke-width: 11;
    stroke-linecap: round;
}
.badge{
    fill: #6c63ff;
    stroke: #fff;
    stroke-width: 29;
    paint-order: stroke;
}
.badge-text{
    fill: #fff;
    font-size: 104px;
    font-weight: 600;
    text-anchor: middle;
}
.expand{
    position: absolute;
    top: 44px;
    right: 44px;
    width: 110px;
    height: 110px;
    display: flex;
    align-items: center;
    justify-content: center;
    border-radius: 33px;
    background: #fff;
    box-shadow: 0 3px 10px #0003;
}
.expand path{
    fill: none;
    stroke: #6c63ff;
    stroke-width: 10;
    stroke-linecap: round;
    stroke-linejoin: round;
}
.legend{
    position: absolute;
    left: 44px;
    bottom: 44px;
    padding: 21px 33px;
    display: flex;
    gap: 33px;
    list-style: none;
    border-radius: 33px;
    background: #fffffff4;
    box-shadow: 0 3px 10px #0003;
    color: #636e72;
}
.legend li{
    display: flex;
    align-items: center;
    gap: 11px;
}
.swatch{
    width: 44px;
    height: 44px;
    border-radius: 50%;
}
.swatch-fast{
    background: #03d9a5;
}
.swatch-average{
    background: #6c63ff;
}
.swatch-slow{
    background: #ffb800;
}

/* details */
.details{
    padding-top: 66px;
}
.details h2{
    margin-bottom: 43px;
}
.detail{
    padding: 33px 0 32px;
    display: flex;
    align-items: center;
    gap: 33px;
}
.detail:last-child{
    padding-bottom: 0;
}
.name{
    color: #636e72;
}
.value{
    font-size: 45px;
    font-weight: 500;
    line-height: 66px;
}
hr{
    height: 1px;
    margin: 0 0 0 94px;
    border: 0;
    background: #dfe6e9;
}

/* bottom tabs */
.tabs{
    position: sticky;
    bottom: 0;
    display: grid;
    grid-template-columns: repeat(5, 1fr);
    padding: 40px 0 22px;
    border-top: 3px solid #eceff0;
    background: #fefefe;
    box-shadow: 0 -3px 12px #00000008;
}
.tabs a{
    display: flex;
    flex-direction: column;
    align-items: center;
    gap: 6px;
    color: #636e72;
    font-size: 38px;
    font-weight: 500;
    text-decoration: none;
}
.tabs .active{
    color: #6c63ff;
}
.list{
    fill: none;
    stroke: currentColor;
    stroke-width: 18;
    stroke-linecap: round;
}
.pulse, .pulse-end{
    fill: none;
    stroke: #fefefe;
    stroke-width: 12;
    stroke-linecap: round;
    stroke-linejoin: round;
}
.pulse-end{
    stroke: currentColor;
}
```
